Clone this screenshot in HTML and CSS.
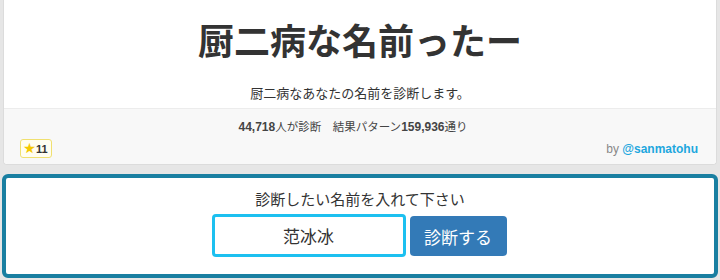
FILE: index.html
```html
<!DOCTYPE html>
<html lang="ja">
<head>
    <meta charset="UTF-8">
    <title>厨二病な名前ったー</title>
    <link rel="stylesheet" href="styles.css">
</head>
<body>
    <div class="shindan-card">
        <div class="card-head">
            <h1 class="title">厨二病な名前ったー</h1>
            <p class="desc">厨二病なあなたの名前を診断します。</p>
        </div>
        <div class="card-foot">
            <div class="stats"><b>44,718</b>人が診断　結果パターン<b>159,936</b>通り</div>
            <div class="foot-row">
                <span class="fav"><span class="star">★</span>11</span>
                <span class="author">by <a href="#">@sanmatohu</a></span>
            </div>
        </div>
    </div>

    <div class="form-box">
        <div class="form-label">診断したい名前を入れて下さい</div>
        <div class="form-row">
            <input type="text" class="name-input" value="范冰冰">
            <button class="submit-btn">診断する</button>
        </div>
    </div>
</body>
</html>
```

FILE: styles.css
```css
body {
    margin: 0;
    background-color: #e6e6e6;
    font-family: "Noto Sans CJK JP", "Liberation Sans", sans-serif;
    color: #333;
}
.shindan-card {
    margin: 0 3px;
    background-color: #fff;
    border: 1px solid #dcdcdc;
    border-top: none;
    border-radius: 0 0 4px 4px;
}
.card-head {
    height: 108px;
    text-align: center;
    padding-top: 1px;
    box-sizing: border-box;
}
.title {
    margin: 9px 0 0;
    font-size: 36px;
    line-height: 58px;
    font-weight: bold;
    color: #333;
}
.desc {
    margin: 15px 0 0;
    font-size: 13px;
    line-height: 20px;
}
.card-foot {
    background-color: #f8f8f8;
    border-top: 1px solid #ececec;
    height: 56px;
    box-sizing: border-box;
    padding: 8px 18px 0 16px;
    border-radius: 0 0 4px 4px;
}
.stats {
    text-align: center;
    font-size: 11.5px;
    line-height: 18px;
    color: #444;
    padding-right: 12px;
}
.stats b {
    font-family: "Liberation Sans", sans-serif;
    font-size: 12px;
}
.foot-row {
    display: flex;
    justify-content: space-between;
    align-items: center;
    margin-top: 3px;
}
.fav {
    display: inline-flex;
    align-items: center;
    border: 1px solid #f0e070;
    background-color: #fffdf0;
    border-radius: 3px;
    padding: 0 3px;
    height: 17px;
    font-family: "Liberation Sans", sans-serif;
    font-size: 11px;
    font-weight: bold;
    color: #333;
}
.star {
    color: #f5c800;
    font-size: 11px;
    margin-right: 1px;
}
.author {
    font-family: "Liberation Sans", sans-serif;
    font-size: 12px;
    color: #888;
}
.author a {
    color: #1ea7de;
    font-weight: bold;
    text-decoration: none;
}
.form-box {
    margin: 9px 2px 0;
    background-color: #fff;
    border: 4px solid #197fa1;
    border-radius: 6px;
    height: 104px;
    box-sizing: border-box;
    text-align: center;
    padding-top: 10px;
}
.form-label {
    font-size: 15px;
    line-height: 22px;
    color: #333;
}
.form-row {
    display: flex;
    justify-content: center;
    gap: 4px;
    margin-top: 4px;
    padding-right: 2px;
}
.name-input {
    width: 194px;
    height: 43px;
    box-sizing: border-box;
    border: 3px solid #1cc0f0;
    border-radius: 4px;
    text-align: center;
    font-family: "Noto Sans CJK SC", "Noto Sans CJK JP", sans-serif;
    font-size: 17px;
    color: #333;
    outline: none;
}
.submit-btn {
    width: 97px;
    height: 40px;
    margin-top: 2px;
    border: none;
    border-radius: 4px;
    background-color: #337ab7;
    color: #fff;
    font-family: "Noto Sans CJK JP", sans-serif;
    font-size: 17px;
}
```
